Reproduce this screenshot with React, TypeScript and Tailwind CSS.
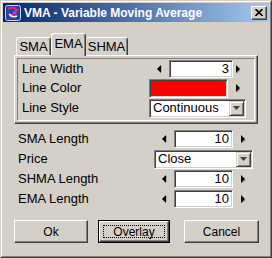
function ArrowL() {
  return (
    <svg width="5" height="8" viewBox="0 0 5 8">
      <polygon points="4,0 4,8 0,4" fill="#000" />
      <polygon points="4.5,1 4.5,7 5,7 5,1" fill="#808080" />
    </svg>
  );
}

function ArrowR() {
  return (
    <svg width="5" height="8" viewBox="0 0 5 8">
      <polygon points="0,0 0,8 4,4" fill="#000" />
      <polygon points="1,7.5 4,4.5 4.5,5 1.5,8" fill="#808080" />
    </svg>
  );
}

function Spin({ value, leftW, inputW, rightW }: { value: string; leftW: number; inputW: number; rightW: number }) {
  return (
    <div className="flex items-center h-[18px]">
      <div className="flex justify-center" style={{ width: leftW }}>
        <ArrowL />
      </div>
      <div
        className="h-[18px] bg-white border border-t-[#808080] border-l-[#808080] border-r-white border-b-white shadow-[inset_1px_1px_0_#404040,inset_-1px_-1px_0_#d4d0c8] flex items-center justify-end pr-[3px]"
        style={{ width: inputW }}
      >
        {value}
      </div>
      <div className="flex justify-center" style={{ width: rightW }}>
        <ArrowR />
      </div>
    </div>
  );
}

function Select({ value, w }: { value: string; w: number }) {
  return (
    <div
      className="h-[19px] bg-white border border-t-[#808080] border-l-[#808080] border-r-white border-b-white shadow-[inset_1px_1px_0_#404040,inset_-1px_-1px_0_#d4d0c8] flex items-center p-px pl-[3px]"
      style={{ width: w }}
    >
      <span className="flex-1">{value}</span>
      <div className="w-[15px] h-[15px] bg-[#d4d0c8] border border-t-[#d4d0c8] border-l-[#d4d0c8] border-r-[#404040] border-b-[#404040] shadow-[inset_1px_1px_0_#fff,inset_-1px_-1px_0_#808080] flex items-center justify-center">
        <svg width="7" height="4" viewBox="0 0 7 4">
          <polygon points="0,0 7,0 3.5,4" fill="#404040" />
        </svg>
      </div>
    </div>
  );
}

const raised =
  'bg-[#d4d0c8] border border-t-white border-l-white border-r-[#404040] border-b-[#404040] shadow-[inset_-1px_-1px_0_#808080]';

export default function App() {
  return (
    <div className="w-[272px] h-[258px] bg-[#d4d0c8] border border-t-[#d4d0c8] border-l-[#d4d0c8] border-r-[#404040] border-b-[#404040] font-['Liberation_Sans',Arial,sans-serif] text-[12px] text-black overflow-hidden">
      <div className="h-full border border-t-white border-l-white border-r-[#808080] border-b-[#808080] p-px flex flex-col">
        {/* title bar */}
        <div className="h-[19px] shrink-0 flex items-center bg-gradient-to-r from-[#0a246a] to-[#a6caf0] pl-[2px] pr-[2px]">
          <svg width="16" height="16" viewBox="0 0 16 16">
            <rect x="0.5" y="0.5" width="15" height="15" rx="2" fill="#2b3fa8" stroke="#c8d4ff" />
            <path d="M3 4 Q8 1 12 5 Q9 8 5 12" stroke="#e0286a" strokeWidth="2.2" fill="none" />
            <path d="M4 9 Q7 13 12 11" stroke="#ffffff" strokeWidth="1.4" fill="none" />
            <circle cx="10" cy="8" r="1.6" fill="#b04ad8" />
          </svg>
          <span className="ml-[3px] text-white font-bold text-[12px] leading-none">VMA - Variable Moving Average</span>
          <div className="flex-1" />
          <div className={`w-[16px] h-[14px] flex items-center justify-center ${raised}`}>
            <svg width="8" height="7" viewBox="0 0 8 7">
              <path d="M0.5 0 L7.5 7 M7.5 0 L0.5 7" stroke="#000" strokeWidth="1.6" />
            </svg>
          </div>
        </div>

        {/* body */}
        <div className="pl-[11px] pt-[11px] flex flex-col">
          {/* tabs */}
          <div className="flex items-end h-[22px] pl-[2px]">
            <div className="w-[35px] h-[18px] flex items-center justify-center border border-b-0 border-t-white border-l-white border-r-[#404040] rounded-t-[3px] shadow-[inset_-1px_0_0_#808080] text-[13px]">
              SMA
            </div>
            <div className="relative z-10 w-[35px] h-[23px] mb-[-1px] bg-[#d4d0c8] flex items-center justify-center border border-b-0 border-t-white border-l-white border-r-[#404040] rounded-t-[3px] shadow-[inset_-1px_0_0_#808080] text-[13px] pb-[3px]">
              EMA
            </div>
            <div className="w-[42px] h-[18px] flex items-center justify-center border border-b-0 border-l-0 border-t-white border-r-[#404040] rounded-t-[3px] shadow-[inset_-1px_0_0_#808080] text-[13px]">
              SHMA
            </div>
          </div>

          {/* tab panel */}
          <div className="w-[244px] h-[69px] border border-t-white border-l-white border-r-[#404040] border-b-[#404040] shadow-[inset_-1px_-1px_0_#808080] p-[2px]">
            <div className="h-full border border-t-[#808080] border-l-[#808080] border-r-white border-b-white flex flex-col text-[13px]">
              <div className="h-[19px] flex items-center">
                <span className="w-[131px] pl-[4px]">Line Width</span>
                <Spin value="3" leftW={20} inputW={64} rightW={11} />
              </div>
              <div className="h-[20px] flex items-center">
                <span className="w-[131px] pl-[4px]">Line Color</span>
                <div className="w-[79px] h-[19px] bg-[#ff0000] border border-t-[#808080] border-l-[#808080] border-r-white border-b-white shadow-[inset_1px_1px_0_#404040,inset_-1px_-1px_0_#d4d0c8]" />
                <div className="w-[5px]" />
                <div className="w-[11px] flex justify-center">
                  <ArrowR />
                </div>
              </div>
              <div className="h-[20px] flex items-center">
                <span className="w-[131px] pl-[4px]">Line Style</span>
                <Select value="Continuous" w={97} />
              </div>
            </div>
          </div>

          {/* parameters */}
          <div className="mt-[5px] flex flex-col w-[244px] text-[13px]">
            <div className="h-[20px] flex items-center">
              <span className="w-[140px] pl-[4px]">SMA Length</span>
              <Spin value="10" leftW={20} inputW={59} rightW={20} />
            </div>
            <div className="h-[20px] flex items-center">
              <span className="w-[140px] pl-[4px]">Price</span>
              <Select value="Close" w={99} />
            </div>
            <div className="h-[20px] flex items-center">
              <span className="w-[140px] pl-[4px]">SHMA Length</span>
              <Spin value="10" leftW={20} inputW={59} rightW={20} />
            </div>
            <div className="h-[20px] flex items-center">
              <span className="w-[140px] pl-[4px]">EMA Length</span>
              <Spin value="10" leftW={20} inputW={59} rightW={20} />
            </div>
          </div>

          {/* buttons */}
          <div className="mt-[11px] flex items-center h-[23px] text-[12px]">
            <div className={`w-[74px] h-[23px] flex items-center justify-center ${raised}`}>Ok</div>
            <div className="ml-[10px] w-[72px] h-[23px] border border-black">
              <div className={`h-full p-[3px] ${raised}`}>
                <div className="h-full border border-dotted border-black flex items-center justify-center">Overlay</div>
              </div>
            </div>
            <div className={`ml-[14px] w-[75px] h-[23px] flex items-center justify-center ${raised}`}>Cancel</div>
          </div>
        </div>
      </div>
    </div>
  );
}
